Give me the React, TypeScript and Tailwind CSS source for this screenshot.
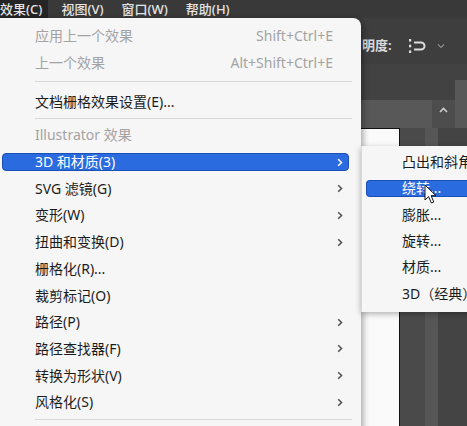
import React from "react";

const font = "font-['Noto_Sans','Noto_Sans_CJK_SC',sans-serif]";

type Row =
  | { kind: "item"; label: string; shortcut?: string; arrow?: boolean; disabled?: boolean; active?: boolean }
  | { kind: "sep"; cls: string };

const rows: Row[] = [
  { kind: "item", label: "应用上一个效果", shortcut: "Shift+Ctrl+E", disabled: true },
  { kind: "item", label: "上一个效果", shortcut: "Alt+Shift+Ctrl+E", disabled: true },
  { kind: "sep", cls: "mt-[5px] mb-[6px]" },
  { kind: "item", label: "文档栅格效果设置(E)..." },
  { kind: "sep", cls: "mt-[3px] mb-[3px]" },
  { kind: "item", label: "Illustrator 效果", disabled: true },
  { kind: "item", label: "3D 和材质(3)", arrow: true, active: true },
  { kind: "item", label: "SVG 滤镜(G)", arrow: true },
  { kind: "item", label: "变形(W)", arrow: true },
  { kind: "item", label: "扭曲和变换(D)", arrow: true },
  { kind: "item", label: "栅格化(R)..." },
  { kind: "item", label: "裁剪标记(O)" },
  { kind: "item", label: "路径(P)", arrow: true },
  { kind: "item", label: "路径查找器(F)", arrow: true },
  { kind: "item", label: "转换为形状(V)", arrow: true },
  { kind: "item", label: "风格化(S)", arrow: true },
  { kind: "sep", cls: "mt-[3px]" },
];

const subItems = ["凸出和斜角...", "绕转...", "膨胀...", "旋转...", "材质...", "3D（经典）"];

const Chevron = ({ white }: { white?: boolean }) => (
  <svg width="6" height="9" viewBox="0 0 6 9" className={white ? "text-white" : "text-[#555555]"}>
    <path d="M1.2 1.2l3.3 3.3-3.3 3.3" fill="none" stroke="currentColor" strokeWidth="1.6" />
  </svg>
);

const Cursor = () => (
  <svg width="14" height="21" viewBox="0 0 14 21" className="absolute left-[424px] top-[184px]">
    <path
      d="M1 1 L1 16 L4.6 12.6 L7.4 19 L9.8 18 L7.1 11.7 L12 11.7 Z"
      fill="#ffffff"
      stroke="#111111"
      strokeWidth="1"
      strokeLinejoin="round"
    />
  </svg>
);

export default function App() {
  return (
    <div className={`relative h-[426px] w-[467px] overflow-hidden bg-[#454545] ${font}`}>
      {/* Menu bar */}
      <div className="flex h-[18px] items-center bg-[#393939] text-[13px] font-medium leading-none text-[#e4e4e4]">
        <div className="flex h-full items-center bg-[#252525] pr-[6px]">效果(C)</div>
        <div className="ml-[13px]">视图(V)</div>
        <div className="ml-[18px]">窗口(W)</div>
        <div className="ml-[18px]">帮助(H)</div>
      </div>

      {/* Control bar */}
      <div className="flex h-[46px] items-center overflow-hidden bg-[#3e3e3e] pl-[362px] pt-[10px] text-[13px] font-bold text-[#d8d8d8]">
        <span className="shrink-0 whitespace-nowrap">明度:</span>
        <svg width="20" height="16" viewBox="0 0 20 16" className="ml-[16px] shrink-0 text-[#dedede]">
          <rect x="1" y="1" width="2.2" height="2.6" fill="currentColor" />
          <rect x="1" y="6.7" width="2.2" height="2.6" fill="currentColor" />
          <rect x="1" y="12.4" width="2.2" height="2.6" fill="currentColor" />
          <path d="M6 4.5h7a3.5 3.5 0 0 1 0 7H6" fill="none" stroke="currentColor" strokeWidth="2" />
        </svg>
        <svg width="8" height="6" viewBox="0 0 8 6" className="ml-[9px] shrink-0 text-[#8a8a8a]">
          <path d="M1 1.5l3 3 3-3" fill="none" stroke="currentColor" strokeWidth="1.2" />
        </svg>
        <div className="ml-[22px] h-[14px] w-[2px] shrink-0 bg-[#9a9a9a]" />
      </div>

      {/* Panel strip */}
      <div className="flex h-[64px]">
        <div className="flex flex-1 flex-col">
          <div className="h-[36px] bg-[#424242]" />
          <div className="h-[28px] bg-[#585858]" />
        </div>
        <div className="flex w-[23px] flex-col">
          <div className="h-[36px] bg-[#424242]" />
          <div className="flex h-[28px] items-start justify-center bg-[#4d4d4d] pt-[7px]">
            <svg width="9" height="6" viewBox="0 0 9 6" className="text-[#d0d0d0]">
              <path d="M1 5l3.5-3.5L8 5" fill="none" stroke="currentColor" strokeWidth="1.6" />
            </svg>
          </div>
        </div>
        <div className="flex w-[12px] flex-col">
          <div className="h-[16px] bg-[#424242]" />
          <div className="flex-1 bg-[#585858]" />
        </div>
      </div>

      {/* Document area */}
      <div className="flex h-[298px]">
        <div className="w-[400px] border-r border-t border-[#111111] bg-[#fafafa]" />
        <div className="w-[25px] bg-[#4a4a4a]" />
        <div className="w-[13px] bg-[#565656]" />
        <div className="flex-1 bg-[#444444]" />
      </div>

      {/* Effect menu */}
      <div className="absolute left-0 top-[18px] h-[420px] w-[361px] rounded-tr-[8px] bg-[#f6f6f6] pt-[5px] text-[14px] shadow-[2px_2px_6px_rgba(0,0,0,0.35)]">
        {rows.map((r, i) =>
          r.kind === "sep" ? (
            <div key={i} className={`ml-[35px] mr-[9px] h-px bg-[#d6d6d6] ${r.cls}`} />
          ) : (
            <div key={i} className="flex h-[26.7px] items-center">
              <div
                className={`ml-[2px] mr-[12px] flex h-[18px] flex-1 items-center justify-between rounded-[4px] border pl-[32px] leading-none ${
                  r.active
                    ? "border-[#1b4fb6] bg-[#2b6be0] text-white"
                    : r.disabled
                    ? "border-transparent text-[#a3a3a3]"
                    : "border-transparent text-[#1c1c1c]"
                } ${r.arrow ? "pr-[5px]" : "pr-[15px]"}`}
              >
                <span>{r.label}</span>
                {r.shortcut && <span className="text-[14px] text-[#a3a3a3]">{r.shortcut}</span>}
                {r.arrow && <Chevron white={r.active} />}
              </div>
            </div>
          )
        )}
      </div>

      {/* 3D submenu */}
      <div className="absolute left-[361px] top-[146px] h-[166px] w-[112px] border-l border-[#d8d8d8] bg-[#f6f6f6] pt-[3px] text-[14px] shadow-[0_2px_6px_rgba(0,0,0,0.3)]">
        {subItems.map((s, i) => (
          <div key={s} className="flex h-[26.3px] items-center">
            <div
              className={`ml-[4px] flex h-[17px] flex-1 items-center whitespace-nowrap rounded-l-[4px] border border-r-0 pl-[35px] leading-none ${
                i === 1 ? "border-[#1b4fb6] bg-[#2b6be0] text-white" : "border-transparent text-[#1c1c1c]"
              }`}
            >
              {s}
            </div>
          </div>
        ))}
      </div>

      <Cursor />
    </div>
  );
}
